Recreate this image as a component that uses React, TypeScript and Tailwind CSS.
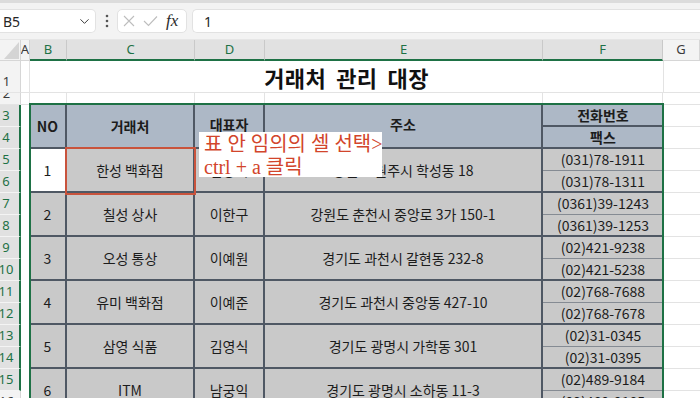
import React from "react";
import { ChevronDown } from "lucide-react";

type Group = {
  no: string;
  name: string;
  rep: string;
  addr: string;
  tel: string;
  fax: string;
  active?: boolean;
};

const groups: Group[] = [
  { no: "1", name: "한성 백화점", rep: "김상식", addr: "강원도 원주시 학성동 18", tel: "(031)78-1911", fax: "(031)78-1311", active: true },
  { no: "2", name: "칠성 상사", rep: "이한구", addr: "강원도 춘천시 중앙로 3가 150-1", tel: "(0361)39-1243", fax: "(0361)39-1253" },
  { no: "3", name: "오성 통상", rep: "이예원", addr: "경기도 과천시 갈현동 232-8", tel: "(02)421-9238", fax: "(02)421-5238" },
  { no: "4", name: "유미 백화점", rep: "이예준", addr: "경기도 과천시 중앙동 427-10", tel: "(02)768-7688", fax: "(02)768-7678" },
  { no: "5", name: "삼영 식품", rep: "김영식", addr: "경기도 광명시 가학동 301", tel: "(02)31-0345", fax: "(02)31-0395" },
  { no: "6", name: "ITM", rep: "남궁익", addr: "경기도 광명시 소하동 11-3", tel: "(02)489-9184", fax: "(02)489-9185" },
];

const sheetRows = [3, 4, 5, 6, 7, 8, 9, 10, 11, 12, 13, 14, 15, 16];

function ColHeader({ label, selected }: { label: string; selected?: boolean }) {
  return (
    <div
      className={
        selected
          ? "flex items-center justify-center bg-[#e1e1e1] text-[#1e7145] border-r border-[#c9c9c9] border-b-2 border-b-[#1e7145] text-[13px]"
          : "flex items-center justify-center bg-[#f3f3f3] text-[#3b3b3b] border-r border-[#d6d6d6] border-b border-b-[#d6d6d6] text-[13px]"
      }
    >
      {label}
    </div>
  );
}

function RowHeader({ label, selected }: { label: string; selected?: boolean }) {
  return (
    <div
      className={
        selected
          ? "flex items-end justify-center pr-[7px] pb-[2px] leading-[18px] overflow-hidden bg-[#e1e1e1] text-[#1e7145] border-r-2 border-r-[#1e7145] border-b border-b-[#f4f4f4] text-[13px]"
          : "flex items-end justify-center pr-[7px] pb-[2px] leading-[18px] overflow-hidden bg-[#f3f3f3] text-[#3b3b3b] border-r border-r-[#d6d6d6] border-b border-b-[#e4e4e4] text-[13px]"
      }
    >
      {label}
    </div>
  );
}

const cellBase =
  "flex items-center justify-center border-r-2 border-b-2 border-[#4f5864] text-[14px] text-[#1c1c1c] whitespace-nowrap overflow-hidden";

export default function App() {
  return (
    <div className="relative w-[700px] h-[398px] overflow-hidden bg-white font-['Noto_Sans','Noto_Sans_CJK_KR',sans-serif]">
      {/* Formula bar */}
      <div className="h-[40px] bg-[#f3f3f3] border-t-[3px] border-[#dcdcdc] flex items-start pt-[6px] border-b border-b-[#e6e6e6]">
        <div className="w-[96px] h-[24px] bg-white rounded-r-[5px] border border-l-0 border-[#e2e2e2] flex items-center justify-between pl-[3px] pr-[3px]">
          <span className="text-[14px] text-[#262626]">B5</span>
          <ChevronDown size={15} strokeWidth={1.6} className="text-[#3a3a3a]" />
        </div>
        <div className="w-[21px] h-[24px] flex items-center justify-center">
          <svg width="4" height="14" viewBox="0 0 4 14">
            <circle cx="2" cy="2" r="1.3" fill="#555" />
            <circle cx="2" cy="7" r="1.3" fill="#555" />
            <circle cx="2" cy="12" r="1.3" fill="#555" />
          </svg>
        </div>
        <div className="w-[70px] h-[24px] bg-white rounded-[5px] border border-[#e2e2e2] flex items-center pl-[5px] gap-[8px]">
          <svg width="12" height="12" viewBox="0 0 12 12">
            <path d="M1 1 L11 11 M11 1 L1 11" stroke="#bdbdbd" strokeWidth="1.1" fill="none" />
          </svg>
          <svg width="15" height="12" viewBox="0 0 15 12">
            <path d="M1 6 L5.5 10.5 L14 1.5" stroke="#bdbdbd" strokeWidth="1.1" fill="none" />
          </svg>
          <span className="italic font-['Liberation_Serif',serif] text-[17px] leading-none text-[#2b2b2b] -mt-[2px]">fx</span>
        </div>
        <div className="ml-[5px] flex-1 h-[24px] bg-white rounded-l-[5px] border border-r-0 border-[#e2e2e2] flex items-center pl-[11px]">
          <span className="text-[14px] text-[#262626]">1</span>
        </div>
      </div>

      {/* Sheet grid */}
      <div className="grid grid-cols-[21px_9px_37px_128px_70px_278px_120px_1fr] grid-rows-[21px_32px_12px_repeat(14,22px)]">
        {/* column headers */}
        <div className="relative bg-[#f3f3f3] border-r border-b border-[#d6d6d6]">
          <svg className="absolute right-[1px] bottom-[1px]" width="15" height="17" viewBox="0 0 15 17">
            <polygon points="15,0 15,17 0,17" fill="#d4d4d4" />
          </svg>
        </div>
        <ColHeader label="A" />
        <ColHeader label="B" selected />
        <ColHeader label="C" selected />
        <ColHeader label="D" selected />
        <ColHeader label="E" selected />
        <ColHeader label="F" selected />
        <ColHeader label="G" />

        {/* row 1 */}
        <RowHeader label="1" />
        <div className="border-r border-b border-[#e3e3e3]" />
        <div className="col-span-5 flex items-center justify-center border-b border-[#e3e3e3] font-['Noto_Sans_CJK_KR',sans-serif] font-bold text-[22px] text-[#111] tracking-[0.3px] [word-spacing:5px] pt-[1px]">
          거래처 관리 대장
        </div>
        <div className="border-l border-b border-[#e3e3e3]" />

        {/* row 2 */}
        <RowHeader label="2" />
        <div className="border-r border-b border-[#e3e3e3]" />
        <div className="border-r border-[#e3e3e3]" />
        <div className="border-r border-[#e3e3e3]" />
        <div className="border-r border-[#e3e3e3]" />
        <div className="border-r border-[#e3e3e3]" />
        <div className="border-r border-[#e3e3e3]" />
        <div className="border-b border-[#e3e3e3]" />

        {/* table */}
        <div className="col-start-3 col-span-5 row-start-4 row-span-14 overflow-hidden font-['Noto_Sans_CJK_KR',sans-serif]">
          <div className="grid grid-cols-[37px_128px_70px_278px_120px] auto-rows-[44px]">
            <div className={`${cellBase} bg-[#adb8c6] font-bold pt-[1px]`}>NO</div>
            <div className={`${cellBase} bg-[#adb8c6] font-bold pt-[1px]`}>거래처</div>
            <div className={`${cellBase} bg-[#adb8c6] font-bold pb-[4px]`}>대표자</div>
            <div className={`${cellBase} bg-[#adb8c6] font-bold pb-[4px]`}>주소</div>
            <div className="flex flex-col border-b-2 border-[#4f5864] bg-[#adb8c6] font-bold text-[14px] text-[#1c1c1c]">
              <div className="h-[22px] flex items-center justify-center border-b-2 border-[#4f5864]">전화번호</div>
              <div className="flex-1 flex items-center justify-center">팩스</div>
            </div>
            {groups.map((g) => (
              <React.Fragment key={g.no}>
                <div className={`${cellBase} ${g.active ? "bg-white" : "bg-[#c9c9c9]"}`}>{g.no}</div>
                <div className={`${cellBase} bg-[#c9c9c9]`}>{g.name}</div>
                <div className={`${cellBase} bg-[#c9c9c9]`}>{g.rep}</div>
                <div className={`${cellBase} bg-[#c9c9c9]`}>{g.addr}</div>
                <div className="flex flex-col border-b-2 border-[#4f5864] bg-[#c9c9c9] text-[14px] text-[#1c1c1c] whitespace-nowrap">
                  <div className="h-[22px] flex items-center justify-center border-b border-[#858b93]">{g.tel}</div>
                  <div className="flex-1 flex items-center justify-center">{g.fax}</div>
                </div>
              </React.Fragment>
            ))}
          </div>
        </div>

        {/* rows 3..16: row headers, column A, column G */}
        {sheetRows.map((r) => (
          <React.Fragment key={r}>
            <RowHeader label={String(r)} selected={r <= 15} />
            <div className="bg-white" />
            <div className="border-b border-[#e3e3e3]" />
          </React.Fragment>
        ))}
      </div>

      {/* selection outline */}
      <div className="absolute left-[29px] top-[103px] w-[635px] h-[310px] border-2 border-[#1e7145] pointer-events-none" />

      {/* red highlight box */}
      <div className="absolute left-[65px] top-[147px] w-[131px] h-[48px] border-2 border-[#c9533c] pointer-events-none" />

      {/* annotation */}
      <div className="absolute left-[199px] top-[132px] w-[183px] h-[45px] bg-white pl-[5px] pt-[1px] text-[#d2452b] text-[20px] leading-[23px] font-['Liberation_Serif','Noto_Sans_CJK_KR',serif] whitespace-nowrap">
        <div>표 안 임의의 셀 선택&gt;</div>
        <div>ctrl + a 클릭</div>
      </div>
    </div>
  );
}
